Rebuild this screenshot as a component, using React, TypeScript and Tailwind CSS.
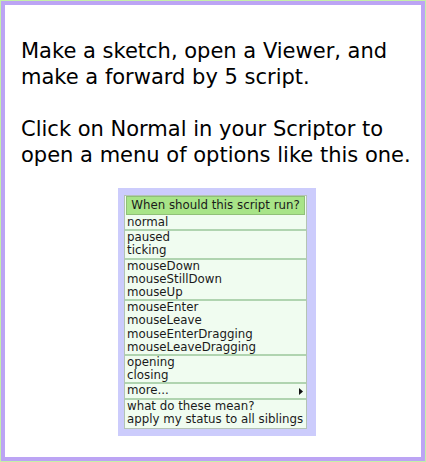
import React from "react";

const groups: string[][] = [
  ["normal"],
  ["paused", "ticking"],
  ["mouseDown", "mouseStillDown", "mouseUp"],
  ["mouseEnter", "mouseLeave", "mouseEnterDragging", "mouseLeaveDragging"],
  ["opening", "closing"],
  ["more..."],
  ["what do these mean?", "apply my status to all siblings"],
];

export default function App() {
  return (
    <div className="w-[426px] h-[462px] bg-[#c4f0a8] p-[1px]">
      <div
        className="h-full border-4 border-[#bca4f4] bg-white pl-[16px] pt-[33px] text-black"
        style={{ fontFamily: '"DejaVu Sans", sans-serif' }}
      >
        <div className="text-[21px] leading-[26px] whitespace-nowrap">
          <p>Make a sketch, open a Viewer, and</p>
          <p>make a forward by 5 script.</p>
          <p className="h-[26px]"></p>
          <p>Click on Normal in your Scriptor to</p>
          <p>open a menu of options like this one.</p>
        </div>
        <div className="mt-[20px] ml-[97px] w-[198px] bg-[#ccccfc] pl-[6px] pr-[9px] pt-[7px] pb-[7px]">
          <div className="border border-[#b4c4b4] bg-[#f0fcf0] pb-[2px] text-[11.8px] leading-[13.2px] text-[#1a1a1a] whitespace-nowrap">
            <div className="border border-[#90c078] bg-[#a8e488] text-center leading-[17px] mx-[1px]">
              When should this script run?
            </div>
            <div className="pt-[1px]">
              {groups.map((g, gi) => (
                <div
                  key={gi}
                  className={gi < groups.length - 1 ? "border-b-2 border-[#b0d4b0]" : ""}
                >
                  {g.map((it) => (
                    <div key={it} className="flex items-center justify-between pl-[2px] pr-[3px]">
                      <span>{it}</span>
                      {it === "more..." && (
                        <svg width="4" height="7" viewBox="0 0 4 7">
                          <path d="M0 0 L4 3.5 L0 7 Z" fill="#111" />
                        </svg>
                      )}
                    </div>
                  ))}
                </div>
              ))}
            </div>
          </div>
        </div>
      </div>
    </div>
  );
}
